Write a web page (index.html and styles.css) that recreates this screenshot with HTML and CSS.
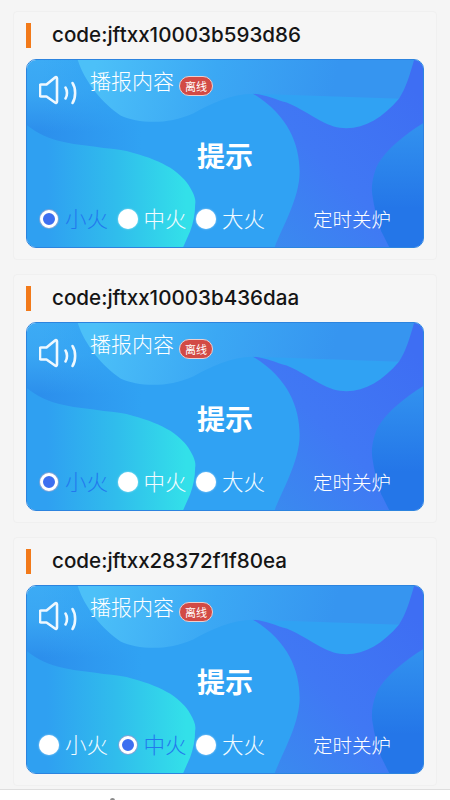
FILE: index.html
```html
<!DOCTYPE html>
<html lang="zh">
<head>
<meta charset="utf-8">
<title>播报</title>
<link rel="stylesheet" href="styles.css">
</head>
<body>
<svg class="defs" width="0" height="0" aria-hidden="true">
  <defs>
    <linearGradient id="base" gradientUnits="userSpaceOnUse" x1="0" y1="0" x2="0" y2="72">
      <stop offset="0" stop-color="#3cabf5"/>
      <stop offset="0.45" stop-color="#39a6f3"/>
      <stop offset="1" stop-color="#2c8fec"/>
    </linearGradient>
    <linearGradient id="mid" gradientUnits="userSpaceOnUse" x1="15" y1="0" x2="115" y2="0">
      <stop offset="0" stop-color="#30a2f3" stop-opacity="0"/>
      <stop offset="1" stop-color="#30a2f3"/>
    </linearGradient>
    <linearGradient id="top" gradientUnits="userSpaceOnUse" x1="70" y1="0" x2="300" y2="60">
      <stop offset="0" stop-color="#4cc0f8"/>
      <stop offset="0.5" stop-color="#3ba8f4"/>
      <stop offset="1" stop-color="#3695f0"/>
    </linearGradient>
    <linearGradient id="cy" gradientUnits="userSpaceOnUse" x1="20" y1="0" x2="160" y2="0">
      <stop offset="0" stop-color="#2fa0f1"/>
      <stop offset="0.5" stop-color="#30bdec"/>
      <stop offset="1" stop-color="#33e0e9"/>
    </linearGradient>
    <linearGradient id="ind" gradientUnits="userSpaceOnUse" x1="240" y1="180" x2="390" y2="30">
      <stop offset="0" stop-color="#3a8aef"/>
      <stop offset="0.45" stop-color="#4078f4"/>
      <stop offset="1" stop-color="#3e6ef3"/>
    </linearGradient>
    <linearGradient id="deep" gradientUnits="userSpaceOnUse" x1="0" y1="64" x2="0" y2="150">
      <stop offset="0" stop-color="#3292ef"/>
      <stop offset="1" stop-color="#2476e8"/>
    </linearGradient>
    <symbol id="bg" viewBox="0 0 398 189" preserveAspectRatio="none">
      <rect width="398" height="189" fill="url(#base)"/>
      <rect width="398" height="189" fill="url(#mid)"/>
      <path d="M51 0C58 22 76 44 94 56C112 64 140 66 167 54C185 44 205 34 227 34L398 40V0Z" fill="url(#top)"/>
      <path d="M227 34C240 35 250 40 261 43C275 49 285 56 294 61C305 67 312 69 321 69C340 69 358 58 374 39C381 28 385 14 389 0H398V189H249C256 170 274 140 274 113C274 85 262 55 227 34Z" fill="url(#ind)"/>
      <path d="M398 64C388 70 380 76 371 84C360 94 354 102 351 109C347 120 346 128 347 136C349 150 352 162 356 173L364 189H398Z" fill="url(#deep)"/>
      <path d="M0 66C10 74 22 80 37 83C50 86 64 87 77 89C88 90 98 91 107 94C122 98 134 103 144 109C154 116 160 122 164 129C168 136 170 141 169 146C169 156 167 165 164 173L157 189H0Z" fill="url(#cy)"/>
    </symbol>
  </defs>
</svg>

<main class="list">
  <section class="card">
    <h2 class="title">code:jftxx10003b593d86</h2>
    <div class="panel">
      <svg class="panel-bg" aria-hidden="true"><use href="#bg"/></svg>
      <div class="head">
        <svg class="speaker" viewBox="0 0 38 30" aria-hidden="true"><path d="M2 9.5H7.5L16 2.5C17 1.7 18 2.2 18 3.5V26.5C18 27.8 17 28.3 16 27.5L7.5 21.5H2C1.4 21.5 1 21 1 20.5V10.5C1 10 1.4 9.5 2 9.5Z"/><path d="M26.5 12.5C28.5 15.5 28.5 20.5 26.5 23.5"/><path d="M33.5 8C37 13 37 23 33.5 28"/></svg>
        <span class="name">播报内容</span>
        <span class="badge">离线</span>
      </div>
      <div class="tip">提示</div>
      <div class="controls">
        <label class="opt on"><i class="radio"></i><span class="opt-text">小火</span></label>
        <label class="opt"><i class="radio"></i><span class="opt-text">中火</span></label>
        <label class="opt"><i class="radio"></i><span class="opt-text">大火</span></label>
        <span class="timer">定时关炉</span>
      </div>
    </div>
  </section>

  <section class="card">
    <h2 class="title">code:jftxx10003b436daa</h2>
    <div class="panel">
      <svg class="panel-bg" aria-hidden="true"><use href="#bg"/></svg>
      <div class="head">
        <svg class="speaker" viewBox="0 0 38 30" aria-hidden="true"><path d="M2 9.5H7.5L16 2.5C17 1.7 18 2.2 18 3.5V26.5C18 27.8 17 28.3 16 27.5L7.5 21.5H2C1.4 21.5 1 21 1 20.5V10.5C1 10 1.4 9.5 2 9.5Z"/><path d="M26.5 12.5C28.5 15.5 28.5 20.5 26.5 23.5"/><path d="M33.5 8C37 13 37 23 33.5 28"/></svg>
        <span class="name">播报内容</span>
        <span class="badge">离线</span>
      </div>
      <div class="tip">提示</div>
      <div class="controls">
        <label class="opt on"><i class="radio"></i><span class="opt-text">小火</span></label>
        <label class="opt"><i class="radio"></i><span class="opt-text">中火</span></label>
        <label class="opt"><i class="radio"></i><span class="opt-text">大火</span></label>
        <span class="timer">定时关炉</span>
      </div>
    </div>
  </section>

  <section class="card">
    <h2 class="title">code:jftxx28372f1f80ea</h2>
    <div class="panel">
      <svg class="panel-bg" aria-hidden="true"><use href="#bg"/></svg>
      <div class="head">
        <svg class="speaker" viewBox="0 0 38 30" aria-hidden="true"><path d="M2 9.5H7.5L16 2.5C17 1.7 18 2.2 18 3.5V26.5C18 27.8 17 28.3 16 27.5L7.5 21.5H2C1.4 21.5 1 21 1 20.5V10.5C1 10 1.4 9.5 2 9.5Z"/><path d="M26.5 12.5C28.5 15.5 28.5 20.5 26.5 23.5"/><path d="M33.5 8C37 13 37 23 33.5 28"/></svg>
        <span class="name">播报内容</span>
        <span class="badge">离线</span>
      </div>
      <div class="tip">提示</div>
      <div class="controls">
        <label class="opt"><i class="radio"></i><span class="opt-text">小火</span></label>
        <label class="opt on"><i class="radio"></i><span class="opt-text">中火</span></label>
        <label class="opt"><i class="radio"></i><span class="opt-text">大火</span></label>
        <span class="timer">定时关炉</span>
      </div>
    </div>
  </section>
</main>
<footer class="bottom"><i class="cut-mark"></i></footer>
</body>
</html>
```
FILE: styles.css
```css
* { box-sizing: border-box; }
html, body { margin: 0; height: 800px; overflow: hidden; }
body {
  background: #f5f5f5;
  font-family: "Noto Sans CJK SC", "Noto Sans", sans-serif;
  display: flex;
  flex-direction: column;
}
.defs { position: absolute; }
.list {
  flex: 1;
  padding: 11px 13px 0;
  display: flex;
  flex-direction: column;
  gap: 14px;
  overflow: hidden;
}
.card {
  flex: none;
  height: 249px;
  background: #f6f6f6;
  border: 1px solid #f0f0f0;
  border-radius: 4px;
  padding: 11px 12px;
}
.title {
  margin: 0 0 11px;
  height: 25px;
  padding-left: 21px;
  border-left: 5px solid #f27a1a;
  font-family: "Inter", "Noto Sans", sans-serif;
  font-size: 20.6px;
  font-weight: 500;
  line-height: 24px;
  color: #151515;
}
.panel {
  position: relative;
  height: 189px;
  width: 398px;
  border-radius: 10px;
  overflow: hidden;
  border: 1px solid #2c84df;
  color: #fff;
  display: flex;
  flex-direction: column;
}
.panel-bg {
  position: absolute;
  left: 0;
  top: 0;
  width: 100%;
  height: 100%;
}
.head, .tip, .controls { position: relative; }
.head {
  height: 50px;
  display: flex;
  align-items: flex-start;
  padding: 15px 0 0 12px;
}
.speaker {
  width: 38px;
  height: 30px;
  flex: none;
  fill: none;
  stroke: #eef8ff;
  stroke-width: 2.6;
  stroke-linecap: round;
  stroke-linejoin: round;
}
.name {
  margin: -9px 0 0 13px;
  font-size: 21px;
  font-weight: 300;
  line-height: 28px;
  color: #fff;
}
.badge {
  margin: 1px 0 0 5px;
  width: 34px;
  height: 20px;
  border-radius: 10px;
  background: #d24a45;
  border: 1px solid #eccfcf;
  font-size: 11px;
  line-height: 18px;
  text-align: center;
  color: #fff;
}
.tip {
  margin-top: 25px;
  height: 40px;
  text-align: center;
  font-size: 28px;
  font-weight: 700;
  line-height: 40px;
}
.controls {
  margin-top: 29px;
  display: flex;
  align-items: center;
  padding: 0 0 0 12px;
  height: 30px;
}
.opt {
  display: flex;
  align-items: center;
  font-size: 21.5px;
  font-weight: 300;
  line-height: 30px;
  color: #f2fbff;
  margin-right: 8.5px;
  width: 70px;
}
.opt-text { margin-top: -2px; }
.radio {
  flex: none;
  width: 20px;
  height: 20px;
  border-radius: 50%;
  background: #fff;
  box-shadow: 0 0 2px rgba(255, 255, 255, .7);
  margin-right: 6px;
}
.on { color: #2278ee; }
.on .radio {
  border: 3px solid #fff;
  background: #3d6ff0;
  box-shadow: 0 0 0 1px #7fa4d8;
  width: 18px;
  height: 18px;
  margin: 0 7px 0 1px;
}
.timer {
  margin-left: auto;
  margin-right: 32px;
  font-size: 19.5px;
  font-weight: 300;
  line-height: 30px;
  color: #fff;
}
.bottom {
  flex: none;
  height: 11px;
  background: #fff;
  border-top: 1px solid #dedede;
  position: relative;
}
.cut-mark {
  position: absolute;
  left: 110px;
  top: 8px;
  width: 5px;
  height: 5px;
  border-radius: 50%;
  background: #8a8a8a;
}
```
